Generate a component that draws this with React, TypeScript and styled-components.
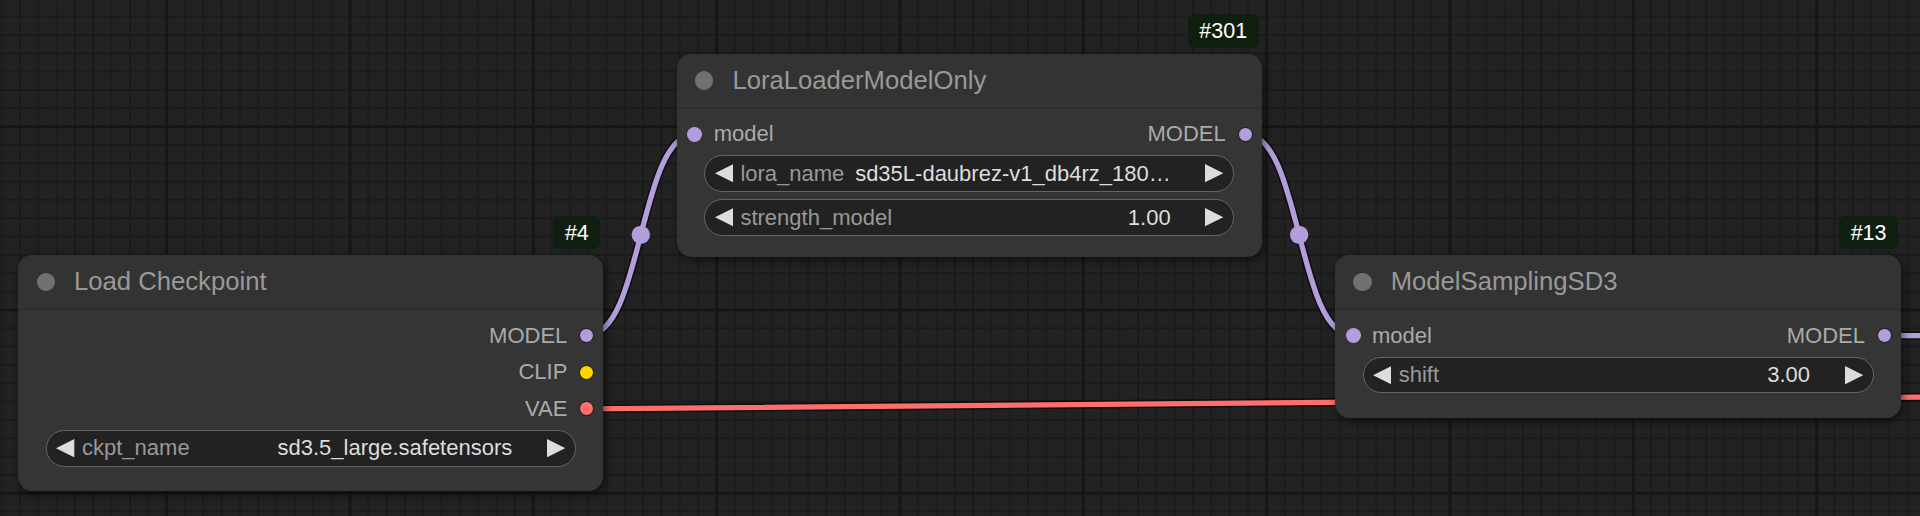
import React from 'react';
import styled, { createGlobalStyle } from 'styled-components';

const Global = createGlobalStyle`
  html, body { margin: 0; padding: 0; background: #222; }
  body { font-family: "Liberation Sans", Arial, sans-serif; }
`;

const TITLE_H = 55;
const BODY_PAD = 7.2;
const ROW_H = 36.67;
const IN_X = 18.3;
const OUT_X = 16.7;
const DOT = 15;

const COLORS = {
  MODEL: '#B39DDB',
  CLIP: '#FFD500',
  VAE: '#FF6E6E',
};

type Slot = { name: string; color: string };
type WidgetDef = { label: string; value: string };
type NodeDef = {
  id: string;
  title: string;
  x: number;
  y: number;
  w: number;
  h: number;
  inputs: Slot[];
  outputs: Slot[];
  widgets: WidgetDef[];
};

const nodes: NodeDef[] = [
  {
    id: '#4',
    title: 'Load Checkpoint',
    x: 18.3,
    y: 255,
    w: 585,
    h: 235.5,
    inputs: [],
    outputs: [
      { name: 'MODEL', color: COLORS.MODEL },
      { name: 'CLIP', color: COLORS.CLIP },
      { name: 'VAE', color: COLORS.VAE },
    ],
    widgets: [{ label: 'ckpt_name', value: 'sd3.5_large.safetensors' }],
  },
  {
    id: '#301',
    title: 'LoraLoaderModelOnly',
    x: 676.7,
    y: 53.6,
    w: 585,
    h: 203.4,
    inputs: [{ name: 'model', color: COLORS.MODEL }],
    outputs: [{ name: 'MODEL', color: COLORS.MODEL }],
    widgets: [
      { label: 'lora_name', value: 'sd35L-daubrez-v1_db4rz_180…' },
      { label: 'strength_model', value: '1.00' },
    ],
  },
  {
    id: '#13',
    title: 'ModelSamplingSD3',
    x: 1335,
    y: 255,
    w: 566,
    h: 162.5,
    inputs: [{ name: 'model', color: COLORS.MODEL }],
    outputs: [{ name: 'MODEL', color: COLORS.MODEL }],
    widgets: [{ label: 'shift', value: '3.00' }],
  },
];

const slotY = (n: NodeDef, i: number) => n.y + TITLE_H + BODY_PAD + ROW_H / 2 + ROW_H * i;
const inPos = (n: NodeDef, i: number) => ({ x: n.x + IN_X, y: slotY(n, i) });
const outPos = (n: NodeDef, i: number) => ({ x: n.x + n.w - OUT_X, y: slotY(n, i) });

const linkPath = (a: { x: number; y: number }, b: { x: number; y: number }) => {
  const d = Math.hypot(b.x - a.x, b.y - a.y) * 0.25;
  return `M${a.x} ${a.y} C${a.x + d} ${a.y} ${b.x - d} ${b.y} ${b.x} ${b.y}`;
};

const Canvas = styled.div`
  position: relative;
  width: 1920px;
  height: 516px;
  overflow: hidden;
  background-color: #222222;
  background-image:
    linear-gradient(to right, #161616 0 3px, transparent 3px),
    linear-gradient(to bottom, #161616 0 3px, transparent 3px),
    linear-gradient(to right, #1b1b1b 0 2px, transparent 2px),
    linear-gradient(to bottom, #1b1b1b 0 2px, transparent 2px);
  background-size: 183.333px 183.333px, 183.333px 183.333px, 18.333px 18.333px, 18.333px 18.333px;
  background-position: 165.2px 0, 0 125.2px, 0.7px 0, 0 15.7px;
`;

const Wires = styled.svg`
  position: absolute;
  left: 0;
  top: 0;
  width: 1920px;
  height: 516px;
  overflow: visible;
`;

const NodeBox = styled.div<{ $x: number; $y: number; $w: number; $h: number }>`
  position: absolute;
  left: ${(p) => p.$x}px;
  top: ${(p) => p.$y}px;
  width: ${(p) => p.$w}px;
  height: ${(p) => p.$h}px;
  box-sizing: border-box;
  background: #353535;
  border-radius: 14.7px;
  box-shadow: 2px 3px 8px rgba(0, 0, 0, 0.55);
  display: flex;
  flex-direction: column;
`;

const Badge = styled.div`
  position: absolute;
  right: 3px;
  bottom: calc(100% + 6px);
  height: 33.3px;
  box-sizing: border-box;
  padding: 2px 11.5px 0;
  border-radius: 6px;
  background: #0f1f0f;
  color: #ffffff;
  font-size: 21.5px;
  line-height: 31.3px;
  white-space: nowrap;
`;

const TitleBar = styled.div`
  height: ${TITLE_H}px;
  box-sizing: border-box;
  display: flex;
  align-items: center;
  padding-left: 18.3px;
  background: #333333;
  border-radius: 14.7px 14.7px 0 0;
  border-bottom: 1px solid #2b2b2b;
  flex: none;
`;

const TitleDot = styled.span`
  width: 18.4px;
  height: 18.4px;
  border-radius: 50%;
  background: #717171;
  flex: none;
`;

const TitleText = styled.span`
  margin-left: 19px;
  font-size: 25.67px;
  color: #999999;
  line-height: 1;
  white-space: nowrap;
`;

const Body = styled.div`
  padding-top: ${BODY_PAD}px;
  display: flex;
  flex-direction: column;
`;

const SlotRow = styled.div`
  height: ${ROW_H}px;
  display: flex;
  align-items: center;
`;

const InSlot = styled.div`
  display: flex;
  align-items: center;
  padding-left: ${IN_X - DOT / 2}px;
`;

const OutSlot = styled.div`
  display: flex;
  align-items: center;
  margin-left: auto;
  padding-right: ${OUT_X - DOT / 2}px;
`;

const Dot = styled.span<{ $c: string; $out?: boolean }>`
  width: ${DOT}px;
  height: ${DOT}px;
  box-sizing: border-box;
  border-radius: 50%;
  background: ${(p) => p.$c};
  border: ${(p) => (p.$out ? '1.6px solid #141414' : 'none')};
  flex: none;
`;

const SlotLabel = styled.span<{ $out?: boolean }>`
  font-size: 22px;
  line-height: 1;
  color: #aaaaaa;
  white-space: nowrap;
  ${(p) => (p.$out ? `margin-right: ${36 - OUT_X - DOT / 2}px;` : `margin-left: ${37 - IN_X - DOT / 2}px;`)}
`;

const Widget = styled.div<{ $first?: boolean }>`
  box-sizing: border-box;
  height: 36.67px;
  margin: ${(p) => (p.$first ? 2.8 : 7.33)}px 27.5px 0;
  border: 1.5px solid #666666;
  border-radius: 18.33px;
  background: #222222;
  display: flex;
  align-items: center;
  padding: 0 9.5px;
  font-size: 22px;
  line-height: 1;
  white-space: nowrap;
  overflow: hidden;
`;

const Arrow = styled.svg`
  width: 18.33px;
  height: 18.33px;
  flex: none;
`;

const WLabel = styled.span`
  margin-left: 7.4px;
  color: #999999;
`;

const WValue = styled.span`
  margin-left: auto;
  margin-right: 34.7px;
  color: #dddddd;
`;

const LeftArrow = () => (
  <Arrow viewBox="0 0 10 10">
    <polygon points="10,0 0,5 10,10" fill="#dddddd" />
  </Arrow>
);

const RightArrow = () => (
  <Arrow viewBox="0 0 10 10">
    <polygon points="0,0 10,5 0,10" fill="#dddddd" />
  </Arrow>
);

const GraphNode: React.FC<{ n: NodeDef }> = ({ n }) => {
  const rows = Math.max(n.inputs.length, n.outputs.length);
  return (
    <NodeBox $x={n.x} $y={n.y} $w={n.w} $h={n.h}>
      <Badge>{n.id}</Badge>
      <TitleBar>
        <TitleDot />
        <TitleText>{n.title}</TitleText>
      </TitleBar>
      <Body>
        {Array.from({ length: rows }).map((_, i) => {
          const inp = n.inputs[i];
          const out = n.outputs[i];
          return (
            <SlotRow key={i}>
              {inp && (
                <InSlot>
                  <Dot $c={inp.color} />
                  <SlotLabel>{inp.name}</SlotLabel>
                </InSlot>
              )}
              {out && (
                <OutSlot>
                  <SlotLabel $out>{out.name}</SlotLabel>
                  <Dot $c={out.color} $out />
                </OutSlot>
              )}
            </SlotRow>
          );
        })}
        {n.widgets.map((w, i) => (
          <Widget key={w.label} $first={i === 0}>
            <LeftArrow />
            <WLabel>{w.label}</WLabel>
            <WValue>{w.value}</WValue>
            <RightArrow />
          </Widget>
        ))}
      </Body>
    </NodeBox>
  );
};

type Link = { d: string; color: string; mid?: { x: number; y: number } };

const [ckpt, lora, sampling] = nodes;

const links: Link[] = (() => {
  const a1 = outPos(ckpt, 0);
  const b1 = inPos(lora, 0);
  const a2 = outPos(lora, 0);
  const b2 = inPos(sampling, 0);
  const vae = outPos(ckpt, 2);
  const out3 = outPos(sampling, 0);
  return [
    {
      d: `M${vae.x} ${vae.y} C${vae.x + 478} ${vae.y} 2022 392 2500 392`,
      color: COLORS.VAE,
    },
    { d: linkPath(a1, b1), color: COLORS.MODEL, mid: { x: (a1.x + b1.x) / 2, y: (a1.y + b1.y) / 2 } },
    { d: linkPath(a2, b2), color: COLORS.MODEL, mid: { x: (a2.x + b2.x) / 2, y: (a2.y + b2.y) / 2 } },
    { d: `M${out3.x} ${out3.y} L2100 ${out3.y}`, color: COLORS.MODEL },
  ];
})();

export default function App() {
  return (
    <>
      <Global />
      <Canvas>
        <Wires viewBox="0 0 1920 516">
          {links.map((l, i) => (
            <g key={i}>
              <path d={l.d} fill="none" stroke="rgba(0,0,0,0.55)" strokeWidth={8.5} strokeLinecap="round" />
              <path d={l.d} fill="none" stroke={l.color} strokeWidth={5.3} strokeLinecap="round" />
              {l.mid && <circle cx={l.mid.x} cy={l.mid.y} r={9.2} fill={l.color} />}
            </g>
          ))}
        </Wires>
        {nodes.map((n) => (
          <GraphNode key={n.id} n={n} />
        ))}
      </Canvas>
    </>
  );
}
